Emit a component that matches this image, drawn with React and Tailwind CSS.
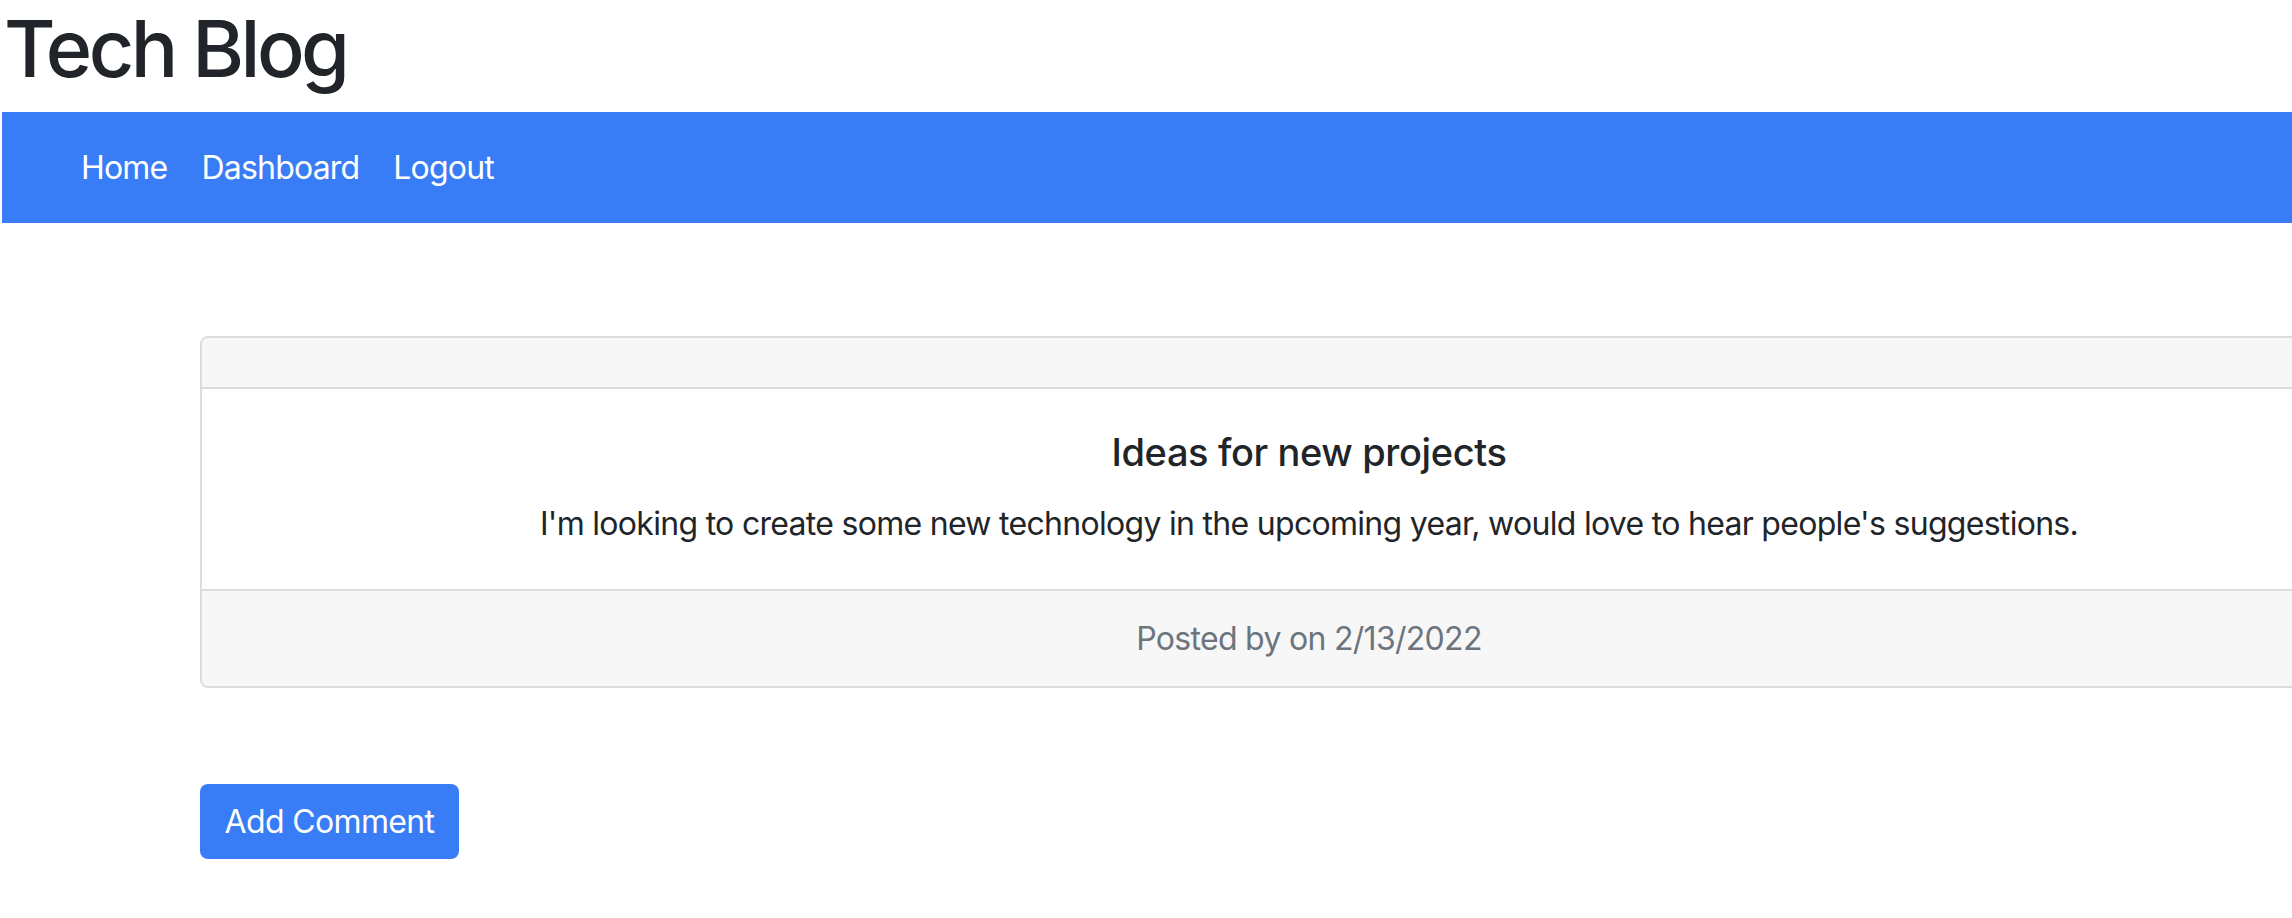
export default function App() {
  return (
    <div className="min-h-[918px] bg-white text-[#212529]" style={{ fontFamily: 'Inter, "Noto Sans", sans-serif' }}>
      <header>
        <h1 className="pl-[4px] text-[79px] font-medium leading-[96px] tracking-[-0.045em] mb-[16px]">Tech Blog</h1>
        <nav className="ml-[2px] h-[111px] bg-[#387cf6] flex items-center gap-[34px] pl-[79px] text-[32px] tracking-[-0.025em] text-white">
          <a href="#">Home</a>
          <a href="#">Dashboard</a>
          <a href="#">Logout</a>
        </nav>
      </header>

      <main className="pl-[200px] pt-[113px] overflow-hidden">
        {/* post card */}
        <div className="w-[2218px] border-2 border-[#dcdcdc] rounded-[8px] overflow-hidden">
          <div className="h-[51px] bg-[#f7f7f7] border-b-2 border-[#dcdcdc]"></div>
          <div className="h-[200px] flex flex-col items-center justify-center text-center">
            <h5 className="text-[38px] font-medium leading-[1.2] tracking-[-0.01em] mb-[24px]">Ideas for new projects</h5>
            <p className="text-[32px] leading-[1.5] tracking-[-0.022em]">
              I'm looking to create some new technology in the upcoming year, would love to hear people's suggestions.
            </p>
          </div>
          <div className="h-[97px] bg-[#f7f7f7] border-t-2 border-[#dcdcdc] flex items-center justify-center text-[32px] tracking-[-0.022em] text-[#6c757d]">
            Posted by on 2/13/2022
          </div>
        </div>

        <button type="button" className="mt-[96px] w-[259px] h-[75px] rounded-[8px] bg-[#387cf6] text-white text-[32px] tracking-[-0.02em]">
          Add Comment
        </button>
      </main>
    </div>
  );
}
